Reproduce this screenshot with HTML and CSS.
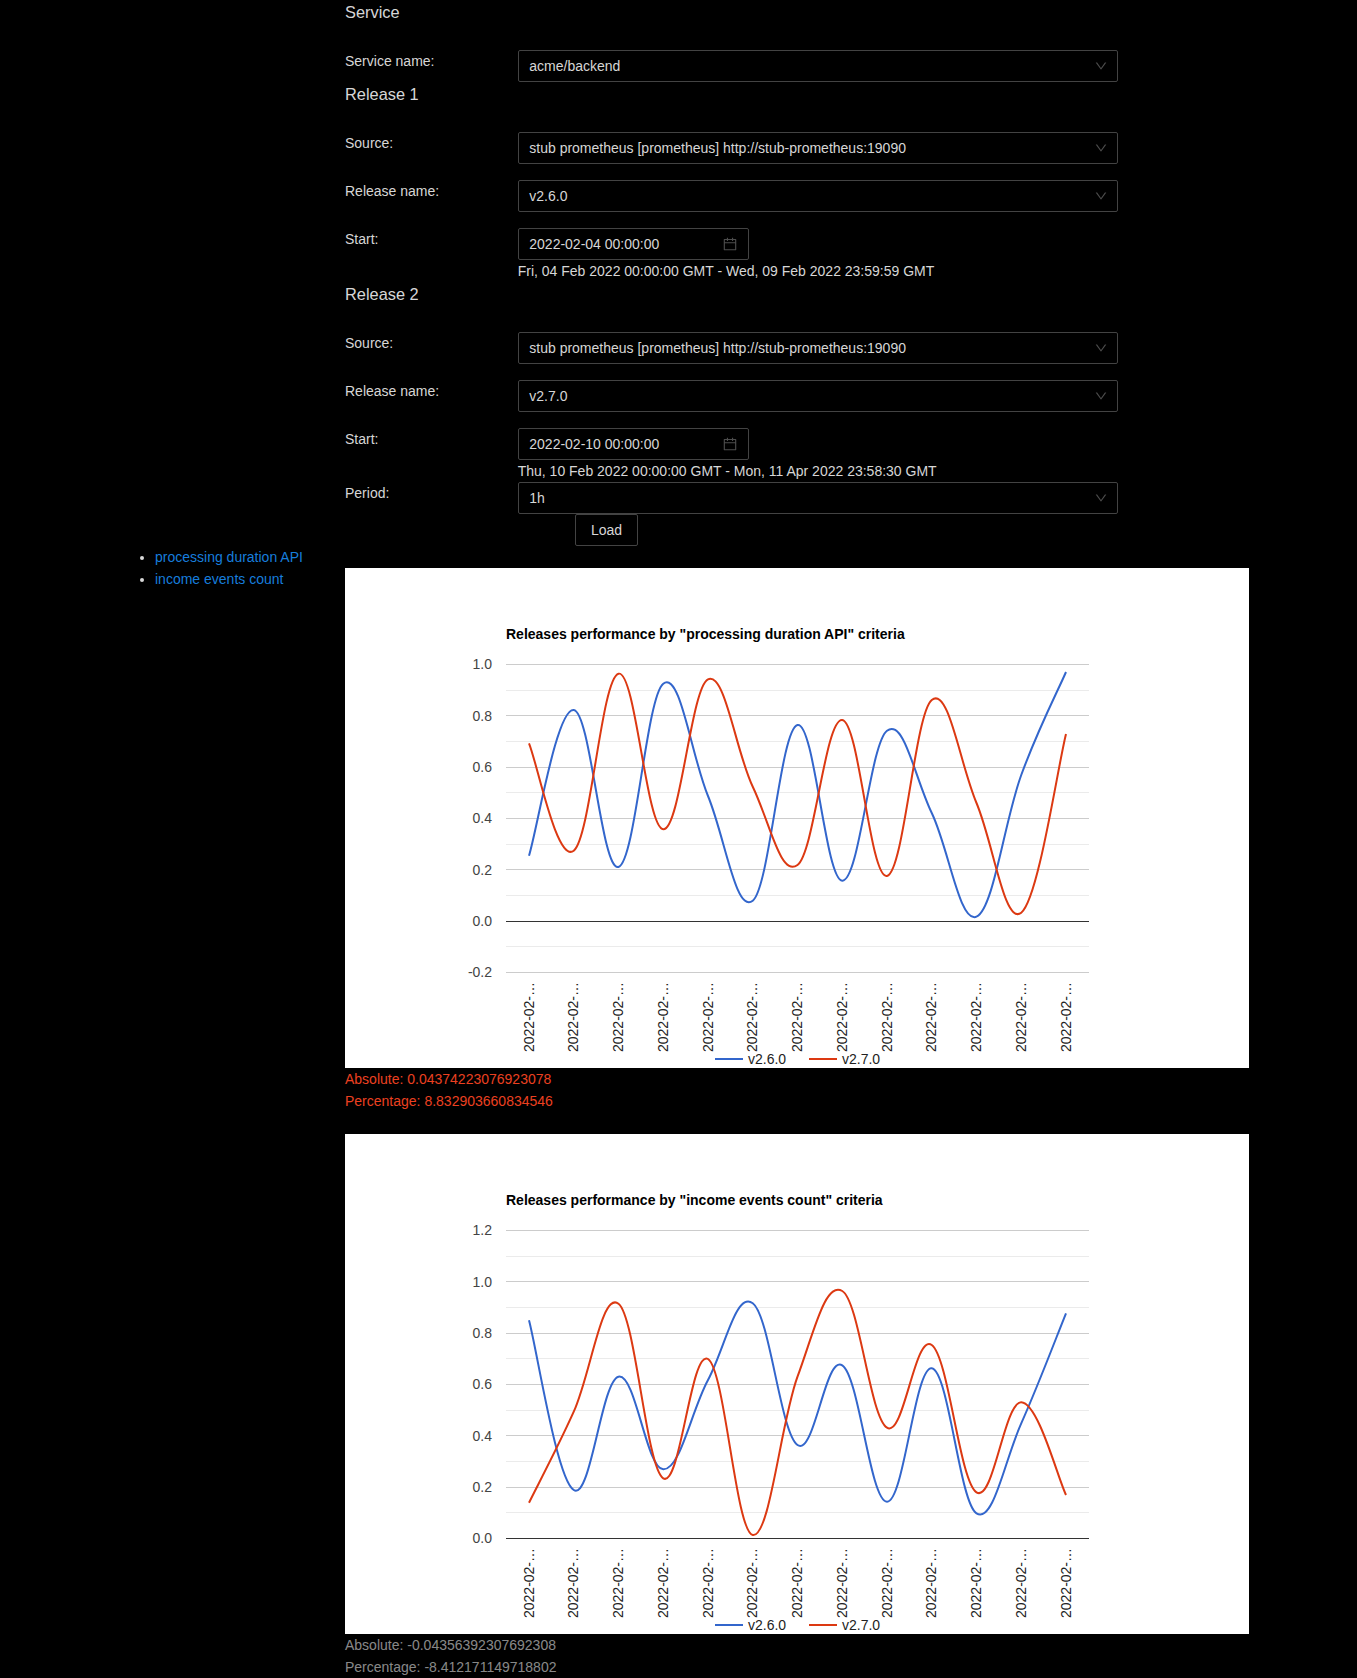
FILE: index.html
```html
<!DOCTYPE html>
<html lang="en">
<head>
<meta charset="utf-8">
<title>Releases comparison</title>
<link rel="stylesheet" href="styles.css">
</head>
<body>
<svg class="defs" width="0" height="0" aria-hidden="true">
  <symbol id="icon-down" viewBox="0 0 1024 1024"><path d="M884 256h-75c-5.1 0-9.9 2.5-12.9 6.6L512 654.2 227.9 262.6c-3-4.1-7.8-6.6-12.9-6.6h-75c-6.5 0-10.3 7.4-6.5 12.7l352.6 486.1c12.8 17.6 39 17.6 51.7 0l352.6-486.1c3.9-5.3.1-12.7-6.4-12.7z"/></symbol>
  <symbol id="icon-calendar" viewBox="0 0 1024 1024"><path d="M880 184H712v-64c0-4.4-3.6-8-8-8h-56c-4.4 0-8 3.6-8 8v64H384v-64c0-4.4-3.6-8-8-8h-56c-4.4 0-8 3.6-8 8v64H144c-17.7 0-32 14.3-32 32v664c0 17.7 14.3 32 32 32h736c17.7 0 32-14.3 32-32V216c0-17.7-14.3-32-32-32zm-40 656H184V460h656v380zM184 392V256h128v48c0 4.4 3.6 8 8 8h56c4.4 0 8-3.6 8-8v-48h256v48c0 4.4 3.6 8 8 8h56c4.4 0 8-3.6 8-8v-48h128v136H184z"/></symbol>
</svg>

<form class="form">
  <h2 class="section-title">Service</h2>
  <div class="row row-tight">
    <label class="label">Service name:</label>
    <div class="control"><div class="field select"><span>acme/backend</span><svg class="icon icon-arrow"><use href="#icon-down"/></svg></div></div>
  </div>

  <h2 class="section-title">Release 1</h2>
  <div class="row">
    <label class="label">Source:</label>
    <div class="control"><div class="field select"><span>stub prometheus [prometheus] http://stub-prometheus:19090</span><svg class="icon icon-arrow"><use href="#icon-down"/></svg></div></div>
  </div>
  <div class="row">
    <label class="label">Release name:</label>
    <div class="control"><div class="field select"><span>v2.6.0</span><svg class="icon icon-arrow"><use href="#icon-down"/></svg></div></div>
  </div>
  <div class="row row-tight">
    <label class="label">Start:</label>
    <div class="control">
      <div class="field date"><span>2022-02-04 00:00:00</span><svg class="icon icon-cal"><use href="#icon-calendar"/></svg></div>
      <div class="range">Fri, 04 Feb 2022 00:00:00 GMT - Wed, 09 Feb 2022 23:59:59 GMT</div>
    </div>
  </div>

  <h2 class="section-title">Release 2</h2>
  <div class="row">
    <label class="label">Source:</label>
    <div class="control"><div class="field select"><span>stub prometheus [prometheus] http://stub-prometheus:19090</span><svg class="icon icon-arrow"><use href="#icon-down"/></svg></div></div>
  </div>
  <div class="row">
    <label class="label">Release name:</label>
    <div class="control"><div class="field select"><span>v2.7.0</span><svg class="icon icon-arrow"><use href="#icon-down"/></svg></div></div>
  </div>
  <div class="row row-tight">
    <label class="label">Start:</label>
    <div class="control">
      <div class="field date"><span>2022-02-10 00:00:00</span><svg class="icon icon-cal"><use href="#icon-calendar"/></svg></div>
      <div class="range">Thu, 10 Feb 2022 00:00:00 GMT - Mon, 11 Apr 2022 23:58:30 GMT</div>
    </div>
  </div>
  <div class="row row-tight">
    <label class="label">Period:</label>
    <div class="control"><div class="field select"><span>1h</span><svg class="icon icon-arrow"><use href="#icon-down"/></svg></div></div>
  </div>
  <div class="actions"><button type="button" class="button">Load</button></div>
</form>

<div class="content">
  <nav class="sidebar">
    <ul class="criteria">
      <li><a href="#processing">processing duration API</a></li>
      <li><a href="#income">income events count</a></li>
    </ul>
  </nav>
  <main class="main">
    <section id="processing">
      <div class="chart" data-chart="processing"></div>
      <p class="metric metric-bad">Absolute: 0.04374223076923078</p>
      <p class="metric metric-bad">Percentage: 8.832903660834546</p>
    </section>
    <section id="income" class="section-last">
      <div class="chart" data-chart="income"></div>
      <p class="metric metric-neutral">Absolute: -0.04356392307692308</p>
      <p class="metric metric-neutral">Percentage: -8.412171149718802</p>
    </section>
  </main>
</div>
<script src="chart.js"></script>
</body>
</html>
```

FILE: styles.css
```css
* { box-sizing: border-box; }

html, body {
  margin: 0;
  padding: 0;
  background: #000;
}

body {
  color: rgba(255, 255, 255, 0.85);
  font-family: "Liberation Sans", Arial, sans-serif;
  font-size: 14px;
  line-height: 22px;
}

.defs { position: absolute; }

.form {
  width: 773px;
  margin-left: 345px;
}

.section-title {
  margin: 0 0 25px;
  font-size: 16.38px;
  font-weight: 400;
  line-height: 25px;
}

.row {
  display: flex;
  margin-bottom: 16px;
}

.row-tight { margin-bottom: 0; }

.label {
  flex: 0 0 172.7px;
  line-height: 22px;
}

.control {
  flex: 1;
  min-width: 0;
}

.field {
  display: flex;
  align-items: center;
  justify-content: space-between;
  height: 32px;
  padding: 0 9px 0 10.6px;
  border: 1px solid #434343;
  border-radius: 2px;
}

.date {
  width: 231px;
  padding-right: 10px;
}

.icon { display: block; fill: currentColor; }

.icon-arrow {
  width: 14px;
  height: 14px;
  color: rgba(255, 255, 255, 0.3);
}

.icon-cal {
  width: 16px;
  height: 16px;
  color: rgba(255, 255, 255, 0.3);
}

.actions { padding-left: 230px; }

.button {
  display: block;
  height: 32px;
  padding: 0 15px;
  border: 1px solid #434343;
  border-radius: 2px;
  background: transparent;
  color: inherit;
  font: inherit;
}

.content { display: flex; }

.sidebar { flex: 0 0 345px; }

.criteria {
  margin: 0;
  padding: 0 0 0 155px;
}

.criteria a {
  color: #177ddc;
  text-decoration: none;
}

.main {
  width: 904px;
  padding-top: 22px;
}

.main section { margin-bottom: 22px; }
.main .section-last { margin-bottom: 0; }

.chart {
  width: 904px;
  height: 500px;
  background: #fff;
}

.chart svg { display: block; }

.metric { margin: 0; }
.metric-bad { color: #ec4020; }
.metric-neutral { color: rgba(255, 255, 255, 0.55); }

.grid-major { stroke: #ccc; }
.grid-minor { stroke: #ebebeb; }
.grid-base { stroke: #333; }

.series { fill: none; stroke-width: 2; }
.series-a { stroke: #3366cc; }
.series-b { stroke: #dc3912; }

.legend-line { stroke-width: 2; }

.chart text {
  font-family: "Liberation Sans", Arial, sans-serif;
  font-size: 14px;
}

.chart-title { fill: #000; font-weight: 700; }
.y-label { fill: #444; text-anchor: end; }
.x-label { fill: #222; }
.legend-label { fill: #222; }
```

FILE: chart.js
```js
(function () {
  var NS = 'http://www.w3.org/2000/svg';
  var charts = {
    processing: {
      title: 'Releases performance by "processing duration API" criteria',
      ticks: ['1.0', '0.8', '0.6', '0.4', '0.2', '0.0', '-0.2'],
      base: 5,
      a: [287.7, 142, 299, 115.7, 228, 332.7, 157, 312.7, 162.7, 245, 348.7, 207, 104],
      b: [175.3, 282.7, 105.7, 261.3, 111.3, 218.7, 297, 152, 308, 132, 235, 344.7, 166]
    },
    income: {
      title: 'Releases performance by "income events count" criteria',
      ticks: ['1.2', '1.0', '0.8', '0.6', '0.4', '0.2', '0.0'],
      base: 6,
      a: [186.3, 356, 242.7, 335.3, 246, 169.2, 311, 231.3, 367.7, 234.3, 379.3, 289.3, 179.3],
      b: [368.7, 277.7, 169.7, 344.3, 225, 401, 242.7, 157, 293.7, 211, 358.3, 268.3, 361]
    }
  };
  var LEFT = 161, RIGHT = 744, TOP = 96.5, STEP = 51.33;
  var X0 = 184, DX = 44.75, K = 0.19;
  var LABEL_NUDGE = [0, 1, 0, 0, 1, 0, 0];

  function el(parent, name, attrs, text) {
    var n = document.createElementNS(NS, name);
    Object.keys(attrs).forEach(function (k) { n.setAttribute(k, attrs[k]); });
    if (text) n.textContent = text;
    parent.appendChild(n);
    return n;
  }

  function px(v) { return Math.round(v - 0.5) + 0.5; }

  function curve(ys) {
    var pts = ys.map(function (y, i) { return [X0 + i * DX, y]; });
    var d = 'M' + pts[0][0] + ' ' + pts[0][1];
    for (var i = 0; i < pts.length - 1; i++) {
      var p0 = pts[Math.max(i - 1, 0)], p1 = pts[i], p2 = pts[i + 1], p3 = pts[Math.min(i + 2, pts.length - 1)];
      d += 'C' + (p1[0] + (p2[0] - p0[0]) * K).toFixed(2) + ' ' + (p1[1] + (p2[1] - p0[1]) * K).toFixed(2) +
        ' ' + (p2[0] - (p3[0] - p1[0]) * K).toFixed(2) + ' ' + (p2[1] - (p3[1] - p1[1]) * K).toFixed(2) +
        ' ' + p2[0] + ' ' + p2[1];
    }
    return d;
  }

  document.querySelectorAll('[data-chart]').forEach(function (host) {
    var c = charts[host.getAttribute('data-chart')];
    var svg = el(host, 'svg', { width: 904, height: 500, viewBox: '0 0 904 500' });
    el(svg, 'text', { class: 'chart-title', x: 161, y: 71 }, c.title);

    for (var m = 0; m < 6; m++) {
      var my = px(TOP + (m + 0.5) * STEP);
      el(svg, 'line', { class: 'grid-minor', x1: LEFT, x2: RIGHT, y1: my, y2: my });
    }
    c.ticks.forEach(function (t, i) {
      var y = px(TOP + i * STEP);
      if (i !== c.base) el(svg, 'line', { class: 'grid-major', x1: LEFT, x2: RIGHT, y1: y, y2: y });
      el(svg, 'text', { class: 'y-label', x: 147, y: y + 4 + LABEL_NUDGE[i] }, t);
    });
    var by = px(TOP + c.base * STEP);
    el(svg, 'line', { class: 'grid-base', x1: LEFT, x2: RIGHT, y1: by, y2: by });

    el(svg, 'path', { class: 'series series-a', d: curve(c.a) });
    el(svg, 'path', { class: 'series series-b', d: curve(c.b) });

    for (var i = 0; i < 13; i++) {
      var x = X0 + i * DX + 4.6, y = 484;
      el(svg, 'text', { class: 'x-label', x: x, y: y, transform: 'rotate(-90 ' + x + ' ' + y + ')' }, '2022-02-\u2026');
    }

    el(svg, 'line', { class: 'legend-line series-a', x1: 370, x2: 398, y1: 491, y2: 491 });
    el(svg, 'text', { class: 'legend-label', x: 403, y: 496 }, 'v2.6.0');
    el(svg, 'line', { class: 'legend-line series-b', x1: 464, x2: 492, y1: 491, y2: 491 });
    el(svg, 'text', { class: 'legend-label', x: 497, y: 496 }, 'v2.7.0');
  });
})();
```
